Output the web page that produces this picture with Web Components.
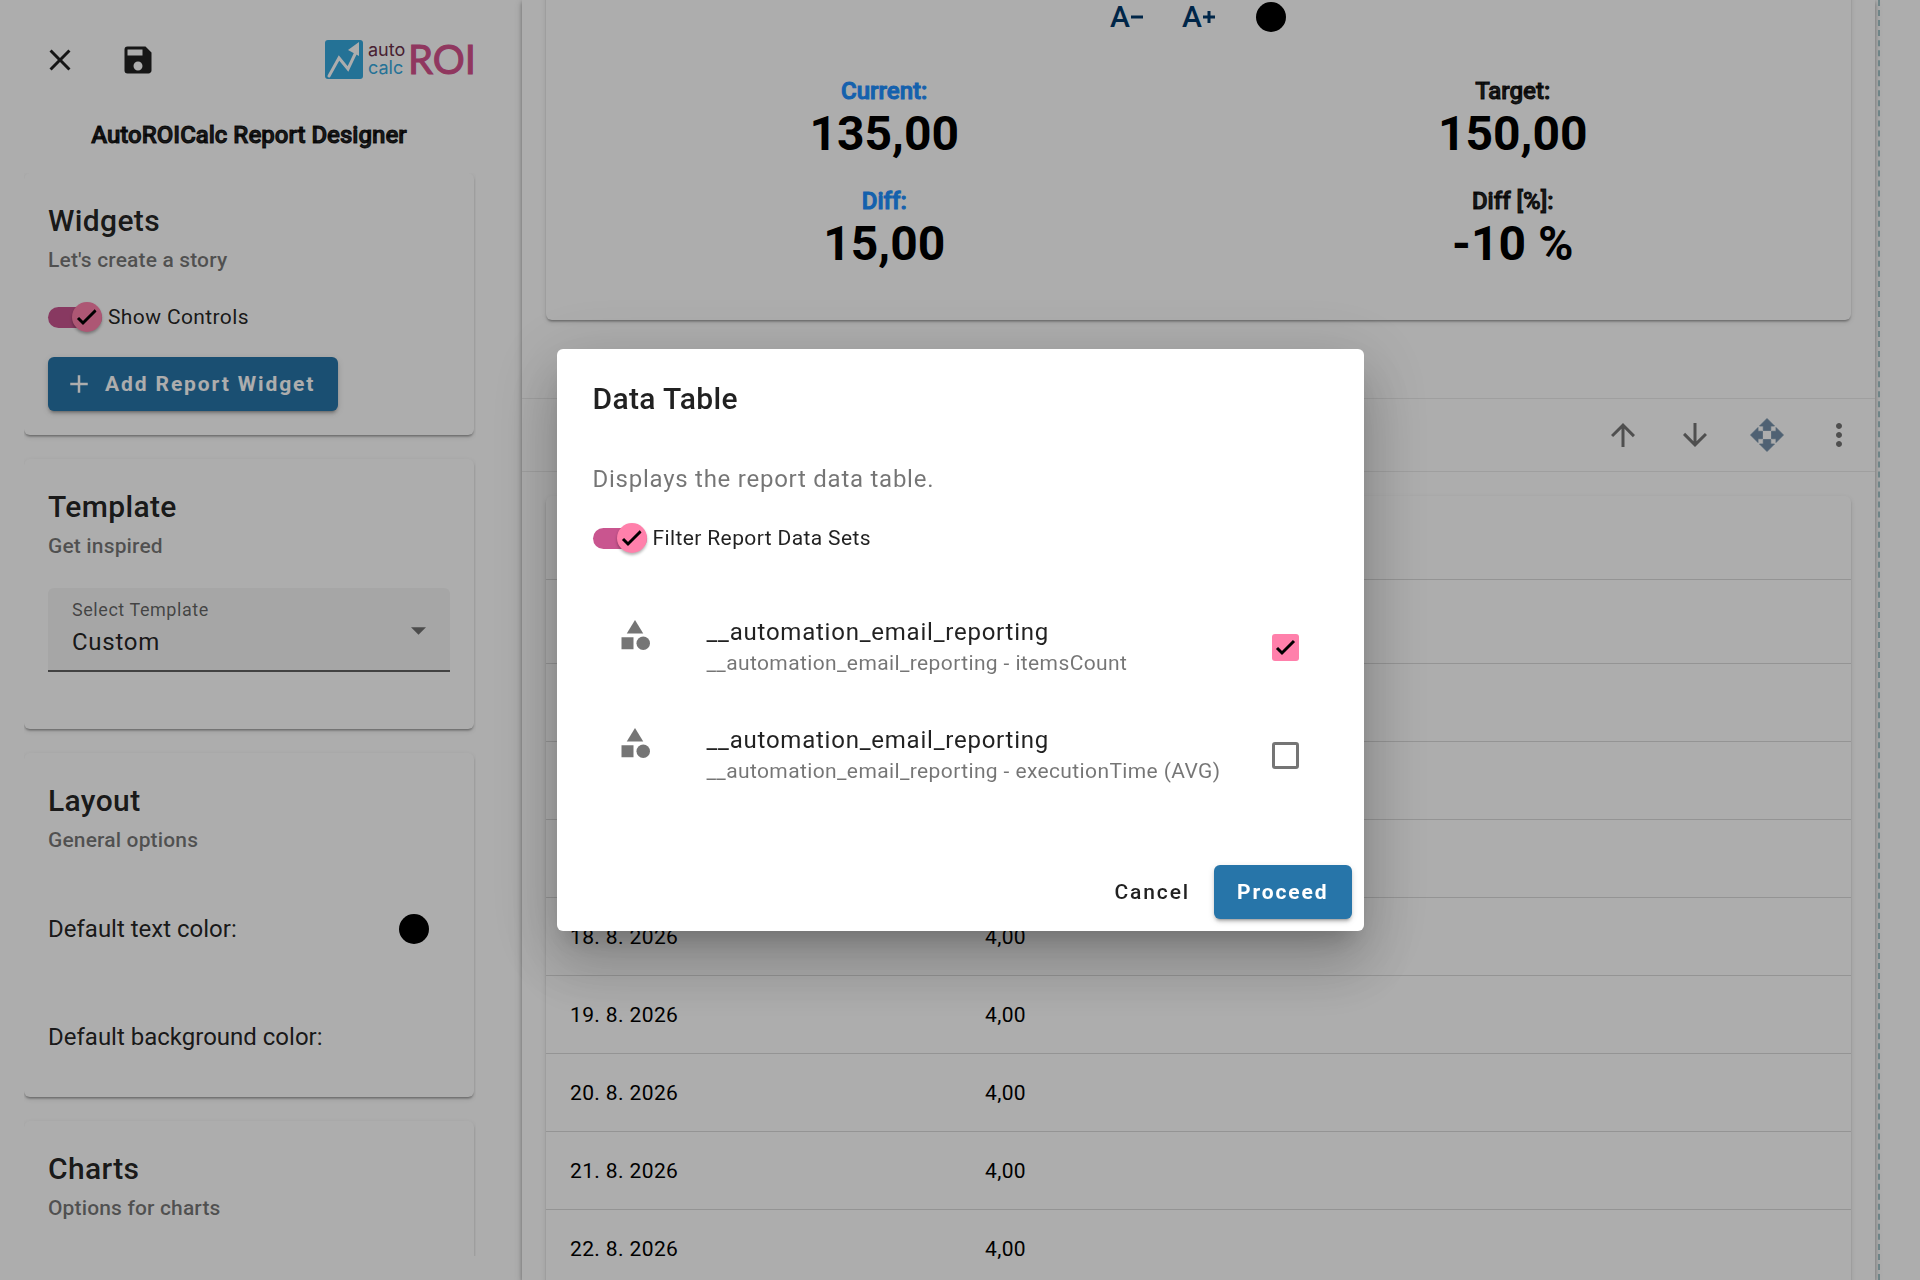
<!DOCTYPE html>
<html lang="en">
<head>
<meta charset="utf-8">
<title>AutoROICalc Report Designer</title>
<style>
  html, body { height: 100%; }
  body { margin: 0; background: #fff; color: rgba(0,0,0,.87); font-family: Roboto, "Liberation Sans", sans-serif; font-size: 24px; overflow: hidden; }
</style>
</head>
<body>
<report-designer></report-designer>

<script>
const define = (name, html, setup) => {
  const t = document.createElement('template');
  t.innerHTML = '<style>*{box-sizing:border-box}button{font:inherit;color:inherit;background:none;border:0;padding:0;margin:0}h1,h2,p{margin:0}svg{display:block}</style>' + html;
  customElements.define(name, class extends HTMLElement {
    constructor() {
      super();
      this.attachShadow({ mode: 'open' }).append(t.content.cloneNode(true));
    }
    connectedCallback() { if (setup) setup(this, this.shadowRoot); }
  });
};

const ICONS = {
  close: '<path d="M19 6.41 17.59 5 12 10.59 6.41 5 5 6.41 10.59 12 5 17.59 6.41 19 12 13.41 17.59 19 19 17.59 13.41 12z"/>',
  save: '<path d="M17 3H5a2 2 0 0 0-2 2v14a2 2 0 0 0 2 2h14c1.1 0 2-.9 2-2V7l-4-4zm-5 16c-1.66 0-3-1.34-3-3s1.34-3 3-3 3 1.34 3 3-1.34 3-3 3zm3-10H5V5h10v4z"/>',
  add: '<path d="M19 13h-6v6h-2v-6H5v-2h6V5h2v6h6v2z"/>',
  up: '<path d="M4 12l1.41 1.41L11 7.83V20h2V7.83l5.58 5.59L20 12l-8-8-8 8z"/>',
  down: '<path d="M20 12l-1.41-1.41L13 16.17V4h-2v12.17l-5.58-5.59L4 12l8 8 8-8z"/>',
  move: '<path d="M9.5 9h5V6H17l-5-5-5 5h2.5zM9 9.5H6V7l-5 5 5 5v-2.5h3zM23 12l-5-5v2.5h-3v5h3V17zM14.5 15h-5v3H7l5 5 5-5h-2.500z" stroke="currentColor" stroke-width=".5"/>',
  more: '<path d="M12 8c1.1 0 2-.9 2-2s-.9-2-2-2-2 .9-2 2 .9 2 2 2zm0 2c-1.1 0-2 .9-2 2s.9 2 2 2 2-.9 2-2-.9-2-2-2zm0 6c-1.1 0-2 .9-2 2s.9 2 2 2 2-.9 2-2-.9-2-2-2z"/>',
  category: '<path d="M12 2l-5.5 9h11z"/><circle cx="17.5" cy="17.5" r="4.5"/><path d="M3 13.5h8v8H3z"/>'
};

define('md-icon', `
<style>:host{display:block;flex:none;width:var(--icon-size,36px);height:var(--icon-size,36px)}svg{width:100%;height:100%;fill:currentColor}</style>
<svg viewBox="0 0 24 24" aria-hidden="true"></svg>`,
(el, root) => { root.querySelector('svg').innerHTML = ICONS[el.getAttribute('name')]; });

define('icon-button', `
<style>:host{display:block;flex:none}button{width:72px;height:72px;display:grid;place-items:center}</style>
<button type="button"><slot></slot></button>`,
(el, root) => root.querySelector('button').setAttribute('aria-label', el.getAttribute('label')));

define('text-button', `
<style>
:host{display:block;flex:none}
button{display:flex;align-items:center;gap:11px;height:54px;padding:0 24px;border-radius:6px;font-size:21px;line-height:30px;font-weight:500;letter-spacing:.09em}
:host([raised]) button{padding:0 23px;background:#2775a9;color:#fff;font-weight:700;box-shadow:0 4px 2px -3px rgba(0,0,0,.2),0 3px 3px rgba(0,0,0,.14),0 2px 7px rgba(0,0,0,.12)}
::slotted(md-icon){--icon-size:30px;margin:0 0 0 -7px}
</style>
<button type="button"><slot></slot></button>`);

define('color-dot', `
<style>:host{display:block;flex:none}button{width:72px;height:72px;display:grid;place-items:center}span{width:30px;height:30px;border-radius:50%;background:#000}</style>
<button type="button" aria-label="Color"><span></span></button>`);

define('slide-toggle', `
<style>
:host{display:block}
label{display:flex;align-items:center;gap:6px;height:30px;font-size:21px;line-height:30px;letter-spacing:.018em}
.box{display:grid;align-items:center;width:54px;height:30px}
.box>*{grid-area:1/1}
input{appearance:none;margin:0;width:54px;height:21px;border-radius:11px;background:#c9558f}
svg{justify-self:end;width:30px;height:30px;padding:4px;border-radius:50%;background:#ff80ab;fill:none;stroke:#000;stroke-width:3;box-shadow:0 2px 3px rgba(0,0,0,.3);pointer-events:none}
</style>
<label><span class="box"><input type="checkbox" role="switch" checked><svg viewBox="0 0 22 22"><path d="M2 12l5 5L20 4"/></svg></span><span><slot></slot></span></label>`);

define('brand-logo', `
<style>:host{display:block}svg{width:150px;height:42px;overflow:visible;font-family:Inter,sans-serif}</style>
<svg viewBox="0 0 150 42" role="img" aria-label="autocalc ROI">
<rect x="1" y="1" width="38" height="39" rx="3" fill="#36a8de"/>
<path d="M5 37L15 19l9 11 9-19" fill="none" stroke="#fff" stroke-width="3" stroke-linecap="round"/>
<path d="M35 3v14l-11-6z" fill="#fff"/>
<text x="44" y="17" font-size="18" fill="#6b3049">auto</text>
<text x="44" y="35" font-size="18" fill="#36a8de">calc</text>
<text x="84" y="35" font-size="40" font-family="Lato" fill="#d4518c" stroke="#d4518c">ROI</text>
</svg>`);

define('side-card', `
<style>
:host{display:block;flex:none;padding:24px;border-radius:6px;background:#fff;box-shadow:0 3px 2px -2px rgba(0,0,0,.2),0 2px 2px rgba(0,0,0,.14),0 2px 5px rgba(0,0,0,.12)}
h2{font-size:30px;line-height:48px;font-weight:500;letter-spacing:.012em}
p{font-size:21px;line-height:30px;font-weight:500;letter-spacing:.007em;color:rgba(0,0,0,.54)}
</style>
<h2></h2><p></p><slot></slot>`,
(el, root) => {
  root.querySelector('h2').textContent = el.getAttribute('heading');
  root.querySelector('p').textContent = el.getAttribute('sub');
});

define('template-select', `
<style>
:host{display:block;margin-top:27px;padding-bottom:33px}
.field{display:grid;height:84px;border-radius:6px 6px 0 0;border-bottom:2px solid rgba(0,0,0,.6);background:#f5f5f5}
.field>*{grid-area:1/1}
label{padding:8px 24px;font-size:18px;line-height:27px;letter-spacing:.031em;color:rgba(0,0,0,.6);pointer-events:none}
select{appearance:none;width:100%;height:82px;padding:25px 48px 0 24px;border:0;background:none;color:inherit;font:inherit;letter-spacing:.031em}
svg{place-self:center end;margin:3px 24px 0 0;width:15px;height:8px;fill:rgba(0,0,0,.54);pointer-events:none}
</style>
<div class="field"><select id="tpl"><option>Custom</option></select><label for="tpl">Select Template</label><svg viewBox="0 0 14 7"><path d="M0 0h14L7 7z"/></svg></div>`);

define('option-row', `
<style>:host{display:flex;align-items:center;justify-content:space-between;height:108px;line-height:36px}</style>
<slot></slot>`);

define('side-panel', `
<style>
:host{display:flex;flex-direction:column;flex:none;box-sizing:border-box;width:522px;height:100vh;padding:24px 48px 24px 24px}
header{display:flex;align-items:center;gap:6px;height:72px}
brand-logo{margin-left:auto}
h1{margin:18px 0 17px;text-align:center;font-size:24px;line-height:42px;font-weight:500;-webkit-text-stroke:1px}
.scroll{display:flex;flex-direction:column;gap:24px;flex:1;min-height:0;overflow:hidden;width:452px;padding-right:2px}
slide-toggle{margin:27px 0 25px}
.rows{display:block;margin-top:20px}
option-row:last-child{margin-bottom:-18px}
.tall{min-height:240px}
</style>
<header><icon-button label="Close"><md-icon name="close"></md-icon></icon-button><icon-button label="Save"><md-icon name="save"></md-icon></icon-button><brand-logo></brand-logo></header>
<h1>AutoROICalc Report Designer</h1>
<div class="scroll">
<side-card heading="Widgets" sub="Let's create a story"><slide-toggle>Show Controls</slide-toggle><text-button raised><md-icon name="add"></md-icon>Add Report Widget</text-button></side-card>
<side-card heading="Template" sub="Get inspired"><template-select></template-select></side-card>
<side-card heading="Layout" sub="General options"><div class="rows"><option-row>Default text color:<color-dot></color-dot></option-row><option-row>Default background color:</option-row></div></side-card>
<side-card class="tall" heading="Charts" sub="Options for charts"></side-card>
</div>`);

define('kpi-value', `
<style>:host{display:block;text-align:center;color:#000}
p{font-size:24px;line-height:36px;font-weight:500;-webkit-text-stroke:1px;color:var(--label,rgba(0,0,0,.87))}
strong{display:block;font-size:48px;line-height:50px;font-weight:700}</style>
<p></p><strong><slot></slot></strong>`,
(el, root) => { root.querySelector('p').textContent = el.getAttribute('label'); });

define('kpi-card', `
<style>
:host{display:block;margin:0 24px;padding:0 24px 51px;background:#fff;border-radius:0 0 6px 6px;box-shadow:0 3px 2px -2px rgba(0,0,0,.2),0 2px 2px rgba(0,0,0,.14),0 2px 5px rgba(0,0,0,.12)}
.tools{display:flex;justify-content:center;margin:-19px 0 20px;color:#00386b}
.size{display:flex;align-items:center;gap:1px;font-size:30px;line-height:36px;font-weight:500}
.size svg{width:12px;height:12px;fill:none;stroke:currentColor;stroke-width:3}
.grid{display:grid;grid-template-columns:1fr 1fr;row-gap:24px}
.blue{--label:#1e90ff}
</style>
<div class="tools">
<icon-button label="Smaller text"><span class="size">A<svg viewBox="0 0 12 12"><path d="M0 6h12"/></svg></span></icon-button>
<icon-button label="Larger text"><span class="size">A<svg viewBox="0 0 12 12"><path d="M0 6h12M6 0v12"/></svg></span></icon-button>
<color-dot></color-dot></div>
<div class="grid">
<kpi-value class="blue" label="Current:">135,00</kpi-value><kpi-value label="Target:">150,00</kpi-value>
<kpi-value class="blue" label="Diff:">15,00</kpi-value><kpi-value label="Diff [%]:">-10 %</kpi-value>
</div>`);

define('widget-toolbar', `
<style>:host{display:flex;justify-content:flex-end;margin-top:78px;border:solid rgba(0,0,0,.08);border-width:1px 0;color:rgba(0,0,0,.54)}.move{color:#7590aa}</style>
<icon-button label="Move up"><md-icon name="up"></md-icon></icon-button>
<icon-button label="Move down"><md-icon name="down"></md-icon></icon-button>
<icon-button label="Drag" class="move"><md-icon name="move"></md-icon></icon-button>
<icon-button label="More"><md-icon name="more"></md-icon></icon-button>`);

define('data-table', `
<style>
:host{display:block;margin:24px 24px 0;background:#fff;border-radius:6px;box-shadow:0 3px 2px -2px rgba(0,0,0,.2),0 2px 2px rgba(0,0,0,.14),0 2px 5px rgba(0,0,0,.12)}
table{width:100%;border-collapse:separate;border-spacing:0;table-layout:fixed;color:#000;font-size:21px;line-height:30px}
th,td{height:78px;padding:0 24px;text-align:left;border-bottom:1px solid rgba(0,0,0,.14);letter-spacing:.018em}
th{height:84px}
th:first-child{width:415px}
</style>
<table><thead><tr><th></th><th></th></tr><tr><th></th><th></th></tr></thead><tbody></tbody></table>`,
(el, root) => {
  const rows = [['', ''], ['', ''], ['', ''], ...[18, 19, 20, 21, 22].map(d => [d + '. 8. 2026', '4,00'])];
  root.querySelector('tbody').innerHTML = rows.map(r => '<tr>' + r.map(c => '<td>' + c + '</td>').join('') + '</tr>').join('');
});

define('report-page', `
<style>
:host{display:block;flex:1;min-width:0;height:100vh;overflow:hidden;background:#fff;box-shadow:0 2px 4px rgba(0,0,0,.3),0 2px 8px rgba(0,0,0,.15)}
</style>
<kpi-card></kpi-card><widget-toolbar></widget-toolbar><data-table></data-table>`);

define('data-set-item', `
<style>
label{display:flex;align-items:center;height:108px;padding:0 24px}
md-icon{margin:-24px 54px 0 0;color:rgba(0,0,0,.54)}
.text{flex:1;display:block}
b,small{display:block;font-weight:400}
b{font-size:24px;line-height:32px;letter-spacing:.032em}
small{font-size:21px;line-height:30px;color:rgba(0,0,0,.54);letter-spacing:.018em;white-space:nowrap}
.box{display:grid;width:27px;height:27px;margin-right:5px}
.box>*{grid-area:1/1}
input{appearance:none;margin:0;width:27px;height:27px;border:3px solid rgba(0,0,0,.54);border-radius:3px}
input:checked{border:0;background:#ff80ab}
svg{display:none;padding:3px;width:27px;height:27px;fill:none;stroke:#000;stroke-width:3;pointer-events:none}
input:checked+svg{display:block}
</style>
<label><md-icon name="category"></md-icon><span class="text"><b>__automation_email_reporting</b><small><slot></slot></small></span><span class="box"><input type="checkbox"><svg viewBox="0 0 21 21"><path d="M2 11l5 5L19 4"/></svg></span></label>`,
(el, root) => { root.querySelector('input').checked = el.hasAttribute('checked'); });

define('data-dialog', `
<style>
:host{position:fixed;inset:0;display:grid;place-items:center;background:rgba(0,0,0,.32)}
section{width:807px;padding:26px 36px 12px;border-radius:6px;background:#fff;box-shadow:0 17px 23px -11px rgba(0,0,0,.2),0 36px 57px 5px rgba(0,0,0,.14),0 14px 69px 12px rgba(0,0,0,.12)}
h2{font-size:30px;line-height:48px;font-weight:500;letter-spacing:.012em}
p{margin:38px 0 26px;line-height:36px;color:rgba(0,0,0,.54);letter-spacing:.031em}
.list{display:block;margin:40px 0 56px}
footer{display:flex;justify-content:flex-end;margin-right:-24px}
</style>
<section role="dialog" aria-modal="true" aria-labelledby="t">
<h2 id="t">Data Table</h2>
<p>Displays the report data table.</p>
<slide-toggle>Filter Report Data Sets</slide-toggle>
<div class="list">
<data-set-item checked>__automation_email_reporting - itemsCount</data-set-item>
<data-set-item>__automation_email_reporting - executionTime (AVG)</data-set-item>
</div>
<footer><text-button>Cancel</text-button><text-button raised>Proceed</text-button></footer>
</section>`);

define('report-designer', `
<style>
:host{display:flex;height:100vh;overflow:hidden}
.gutter{flex:none;width:42px;margin-left:3px;border-left:2px dashed #a3c3c8}
</style>
<side-panel></side-panel><report-page></report-page><div class="gutter"></div>
<data-dialog></data-dialog>`);
</script>
</body>
</html>
